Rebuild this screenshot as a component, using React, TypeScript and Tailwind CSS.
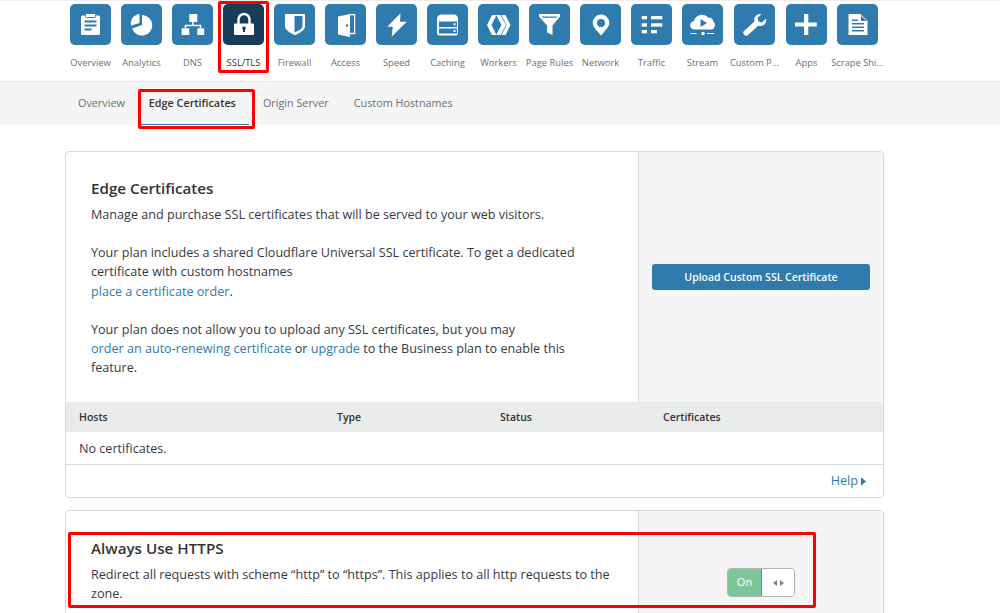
const blue = "#2f7bad";

const Overview = () => (
  <>
    <path fillRule="evenodd" d="M13 11.500h4V10h7v1.500h4.500A1.500 1.500 0 0 1 30 13v16.500a1.500 1.500 0 0 1-1.500 1.500h-16a1.500 1.500 0 0 1-1.500-1.500V13a1.500 1.500 0 0 1 1.500-1.500zM14.500 16.500v2h12v-2zM14.500 20.500v2h12v-2zM14.500 24.500v2h7v-2z" />
    <rect x="15.500" y="9.500" width="10" height="4" rx="1" stroke={blue} strokeWidth="1" />
  </>
);

const Analytics = () => (
  <>
    <path d="M21 11a10.300 10.300 0 1 1-9.800 13.500L21 21z" />
    <path d="M18.500 10v9L10 21.500A9.500 9.500 0 0 1 18.500 10z" />
  </>
);

const Dns = () => (
  <>
    <rect x="17.300" y="10" width="8" height="8" />
    <rect x="9.700" y="24.300" width="7.600" height="6.700" />
    <rect x="25.300" y="24.300" width="6.900" height="6.700" />
    <path d="M21 18v3.500M13.500 24.300v-2.800h15v2.800" fill="none" stroke="#fff" strokeWidth="1.500" />
  </>
);

const Lock = () => (
  <>
    <path d="M15.500 20v-4.500a5.500 5.500 0 0 1 11 0v4.500" fill="none" stroke="#fff" strokeWidth="2.400" />
    <path fillRule="evenodd" d="M12 19.500h18a1 1 0 0 1 1 1V30a1 1 0 0 1-1 1H12a1 1 0 0 1-1-1v-9.500a1 1 0 0 1 1-1zM21 22.500a1.800 1.800 0 0 0-1 3.300V28h2v-2.200a1.800 1.800 0 0 0-1-3.300z" />
  </>
);

const Shield = () => (
  <path fillRule="evenodd" d="M11 10h20v12c0 4-4.500 6.500-10 9.200C15.500 28.500 11 26 11 22zM20.500 12v16.500c3.800-1.800 8-3.500 8-6.500V12z" />
);

const Door = () => (
  <>
    <path fillRule="evenodd" d="M13 12.500 25 10v23l-12-2.500zM22 20.200a1.300 1.300 0 1 0 0 2.600 1.300 1.300 0 0 0 0-2.600z" />
    <path d="M25 10.700h4.600v18.800H25" fill="none" stroke="#fff" strokeWidth="1.300" />
  </>
);

const Bolt = () => <path d="M24.500 9.300 11.300 22.700h5.500l-1.200 10L30.700 17.700H24z" />;

const Server = () => (
  <path fillRule="evenodd" d="M14.500 10.500h12.500c2 0 3.500 1.500 4 3.500v15c0 1.500-1 2.500-2.500 2.500h-16c-1.500 0-2.500-1-2.500-2.500V14c.5-2 2.500-3.500 4.500-3.500zM12 17.500v5.500h18v-5.500zM12 24.500v5h18v-5zM26.500 19.300h2v2h-2zM26.500 26h2v2h-2z" />
);

const Workers = () => (
  <>
    <path d="M14 11h4.500l-5 10 5 10H14L9 21z" />
    <path d="M18 11h4.500l5.500 10-5.500 10H18l5.500-10z" />
    <path d="M23.500 11h4l5 10-5 10h-4l5-10z" />
  </>
);

const Funnel = () => (
  <path fillRule="evenodd" d="M10 10h21v2.500l-7.500 9v9.500l-5.500-2.500v-7L10 12.500zM12.500 12.500l1.200 1.300h13.600l1.200-1.300z" />
);

const Pin = () => (
  <path fillRule="evenodd" d="M21 10.500a8.300 8.300 0 0 1 8.300 8.300c0 4.500-5 8.700-8.300 12.700-3.300-4-8.300-8.200-8.300-12.700a8.300 8.300 0 0 1 8.300-8.300zM21 15a4 4 0 1 0 0 8 4 4 0 0 0 0-8z" />
);

const Traffic = () => (
  <>
    <rect x="10.700" y="12" width="5.300" height="3.300" />
    <rect x="20" y="12" width="11.300" height="3.300" />
    <rect x="10.700" y="19.300" width="5.300" height="3.300" />
    <rect x="20" y="19.300" width="11.300" height="3.300" />
    <rect x="10.700" y="26" width="5.300" height="3.300" />
    <rect x="20" y="26" width="6" height="3.300" />
  </>
);

const Stream = () => (
  <>
    <path fillRule="evenodd" d="M12.500 25.500c-5.500 0-6-7.500-.5-8.500 1-5.500 9.500-9 14-3.500 3-.5 5.500 2 5.500 4.500 2.500 1 1.500 7.500-2 7.500zM18.500 15v8l6.500-4z" />
    <path d="M8.500 29.500h6M25 29.500h7" stroke="#fff" strokeWidth="1" />
    <circle cx="21" cy="29.500" r="1.800" />
  </>
);

const Wrench = () => (
  <path d="M32 14.500c1 4-1.500 7.500-5.500 7.500-1 0-1.500 0-2-.5L14 31c-1 1-2.500 1-3.500 0l-.5-.5c-1-1-1-2.500 0-3.500l10.500-9.500c-1-4.500 2-8 7-7.500l-4 4 1 3.500 3.500 1z" />
);

const Plus = () => <path d="M18 10h4.300v8.500h8.500v4h-8.500V31H18v-8.500H9v-4h9z" />;

const Page = () => (
  <path fillRule="evenodd" d="M11.500 10h12l7 7v14h-19zM15 19v1.500h12V19zM15 22.500V24h12v-1.500zM15 26v1.500h12V26zM15 15.500V17h6v-1.500zM24 11.500V17h5.500z" />
);

const nav = [
  { label: "Overview", icon: <Overview /> },
  { label: "Analytics", icon: <Analytics /> },
  { label: "DNS", icon: <Dns /> },
  { label: "SSL/TLS", icon: <Lock />, active: true },
  { label: "Firewall", icon: <Shield /> },
  { label: "Access", icon: <Door /> },
  { label: "Speed", icon: <Bolt /> },
  { label: "Caching", icon: <Server /> },
  { label: "Workers", icon: <Workers /> },
  { label: "Page Rules", icon: <Funnel /> },
  { label: "Network", icon: <Pin /> },
  { label: "Traffic", icon: <Traffic /> },
  { label: "Stream", icon: <Stream /> },
  { label: "Custom P...", icon: <Wrench />, nudge: true },
  { label: "Apps", icon: <Plus />, nudge: true },
  { label: "Scrape Shi...", icon: <Page /> },
];

const tabs = ["Overview", "Edge Certificates", "Origin Server", "Custom Hostnames"];

function RedBox({ className }: { className: string }) {
  return <div className={`pointer-events-none absolute rounded-[2px] border-[3px] border-[#ff0000] ${className}`} />;
}

export default function App() {
  return (
    <div className="relative h-[613px] overflow-hidden bg-white font-['Open_Sans',sans-serif] text-[12.6px] text-[#36393f]">
      <header className="h-[82px] border-t border-t-[#eeeeee] border-b border-b-[#e5e5e5] pl-[65px] pt-[3px]">
        <ul className="flex">
          {nav.map((item) => (
            <li key={item.label} className={`flex w-[51px] flex-col items-center ${item.nudge ? "ml-[1px]" : ""}`}>
              <div className={`h-[41px] w-[41px] rounded-[5px] ${item.active ? "bg-[#173d5a]" : "bg-[#2f7bad]"}`}>
                <svg viewBox="0 0 41 41" className="h-[41px] w-[41px]" fill="#fff">
                  {item.icon}
                </svg>
              </div>
              <span className={`mt-[11px] whitespace-nowrap text-[9.400px] leading-[13px] ${item.active ? "text-[#333333]" : "text-[#6d7074]"}`}>
                {item.label}
              </span>
            </li>
          ))}
        </ul>
      </header>

      <nav className="flex h-[43px] gap-[25px] bg-[#f5f5f5] pl-[78px] text-[10.800px]">
        {tabs.map((tab, i) =>
          i === 1 ? (
            <span key={tab} className="-ml-[10px] -mr-[11px] border-b border-b-[#2f7bad] pl-[9px] pr-[13px] pt-[13px] font-semibold text-[#333333]">
              {tab}
            </span>
          ) : (
            <span key={tab} className="pt-[13px] text-[#6d7074]">
              {tab}
            </span>
          )
        )}
      </nav>

      <main className="ml-[65px] w-[819px] pt-[26px]">
        <section className="overflow-hidden rounded-[4px] border border-[#d9d9d9]">
          <div className="flex h-[250px]">
            <div className="w-[572px] pl-[25px] pr-[50px] pt-[25px] leading-[19.150px]">
              <h2 className="text-[15.200px] leading-[22px] font-semibold text-[#333333]">Edge Certificates</h2>
              <p className="mt-[6px]">Manage and purchase SSL certificates that will be served to your web visitors.</p>
              <p className="mt-[19.150px]">
                Your plan includes a shared Cloudflare Universal SSL certificate. To get a dedicated certificate with custom hostnames
                <br />
                <a className="text-[#2f7bad]">place a certificate order</a>.
              </p>
              <p className="mt-[19.150px]">
                Your plan does not allow you to upload any SSL certificates, but you may
                <br />
                <a className="text-[#2f7bad]">order an auto-renewing certificate</a> or <a className="text-[#2f7bad]">upgrade</a> to the Business plan to enable this feature.
              </p>
            </div>
            <div className="flex flex-1 items-center justify-center border-l border-l-[#d9d9d9] bg-[#f5f5f5]">
              <button className="h-[26px] w-[218px] rounded-[3px] bg-[#2f7bad] pt-[1px] text-[10.500px] font-semibold text-white">
                Upload Custom SSL Certificate
              </button>
            </div>
          </div>
          <div className="grid h-[30px] grid-cols-[258px_163px_163px_1fr] items-center bg-[#eaebeb] pl-[13px] pt-[1px] text-[10.500px] font-semibold text-[#333333]">
            <span>Hosts</span>
            <span>Type</span>
            <span>Status</span>
            <span>Certificates</span>
          </div>
          <div className="flex h-[33px] items-center border-b border-b-[#d9d9d9] pl-[13px] pt-[2px]">No certificates.</div>
          <div className="flex h-[32px] items-center justify-end pr-[17px] pt-[1px] text-[#2f7bad]">
            Help
            <svg viewBox="0 0 6 10" className="ml-[3px] h-[9px] w-[5px]" fill="#2f7bad">
              <path d="M0 0l6 5-6 5z" />
            </svg>
          </div>
        </section>

        <section className="mt-[12px] flex h-[140px] rounded-[4px] border border-[#d9d9d9]">
          <div className="w-[572px] pl-[25px] pr-[20px] pt-[26px] leading-[19.200px]">
            <h2 className="text-[15.200px] leading-[22px] font-semibold text-[#333333]">Always Use HTTPS</h2>
            <p className="mt-[6px]">Redirect all requests with scheme “http” to “https”. This applies to all http requests to the zone.</p>
          </div>
          <div className="flex flex-1 items-start justify-end border-l border-l-[#d9d9d9] bg-[#f5f5f5] pr-[88px] pt-[57px]">
            <div className="flex h-[29px] w-[68px] overflow-hidden rounded-[4px] border border-[#a9b8b3]">
              <span className="flex w-[34px] items-center justify-center border-r border-r-[#5f9f7c] bg-[#7cc79a] text-[11px] text-white">On</span>
              <span className="flex flex-1 items-center justify-center gap-[3px] bg-white">
                <svg viewBox="0 0 4 6" className="h-[6px] w-[4px]" fill="#7a7f85"><path d="M4 0v6L0 3z" /></svg>
                <svg viewBox="0 0 4 6" className="h-[6px] w-[4px]" fill="#7a7f85"><path d="M0 0v6l4-3z" /></svg>
              </span>
            </div>
          </div>
        </section>
      </main>

      <RedBox className="left-[218px] top-[1px] h-[72px] w-[51px]" />
      <RedBox className="left-[138px] top-[89px] h-[40px] w-[117px]" />
      <RedBox className="left-[68px] top-[532px] h-[76px] w-[748px]" />
    </div>
  );
}
